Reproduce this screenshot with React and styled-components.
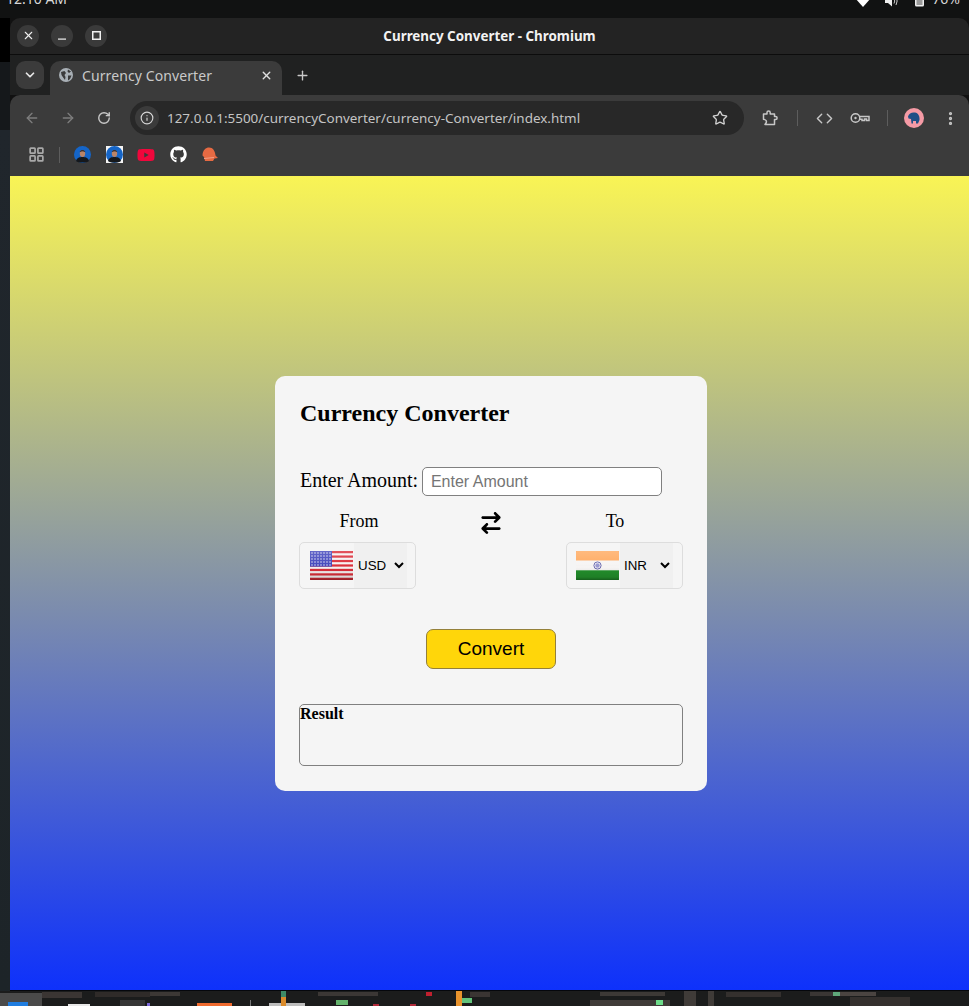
import styled, { createGlobalStyle } from 'styled-components';
import { FaGithub, FaYoutube } from 'react-icons/fa';
import { FaArrowRightArrowLeft } from 'react-icons/fa6';
import {
  ArrowLeft, ArrowRight, RotateCw, Info, Star, ChevronDown, X, Plus, LayoutGrid, Code, EllipsisVertical,
} from 'lucide-react';

const GlobalStyle = createGlobalStyle`
  html, body { margin: 0; padding: 0; background: #111; }
  * { box-sizing: border-box; }
`;

const Screen = styled.div`
  width: 969px;
  height: 1006px;
  overflow: hidden;
  display: flex;
  flex-direction: column;
  background: #111;
`;

const TopBar = styled.div`
  flex: 0 0 18px;
  display: flex;
  justify-content: space-between;
  align-items: flex-end;
  overflow: hidden;
  padding: 0 9px 11px 6px;
  background: #111212;
  color: #d8d8d8;
  font: 14px "Noto Sans", sans-serif;
  line-height: 16px;
`;

const Tray = styled.div`
  display: flex;
  align-items: flex-end;
  gap: 14px;
`;

const TrayPercent = styled.span`
  margin-left: -8px;
`;

const Middle = styled.div`
  flex: 1;
  display: flex;
  min-height: 0;
`;

const SideStrip = styled.div`
  flex: 0 0 10px;
  background: linear-gradient(#000 0, #000 44px, #15181b 44px, #15181b 112px, #20262c 112px, #1d2428 100%);
`;

const Window = styled.div`
  flex: 1;
  display: flex;
  flex-direction: column;
  border-top-left-radius: 10px;
  border-top-right-radius: 10px;
  overflow: hidden;
  border-bottom: 1px solid #05070c;
`;

const TitleBar = styled.div`
  flex: 0 0 37px;
  display: flex;
  align-items: center;
  position: relative;
  gap: 12px;
  padding: 0 0 1px 7px;
  background: #232323;
  border-bottom: 1px solid #0c0c0c;
`;

const WinButton = styled.div`
  width: 22px;
  height: 22px;
  border-radius: 50%;
  background: #3a3a3a;
  color: #efefef;
  display: flex;
  align-items: center;
  justify-content: center;
`;

const WindowTitle = styled.div`
  position: absolute;
  left: 0;
  right: 0;
  text-align: center;
  color: #f2f2f2;
  font: 700 13.4px "Noto Sans", sans-serif;
`;

const TabStrip = styled.div`
  flex: 0 0 40px;
  display: flex;
  align-items: flex-end;
  padding-left: 6px;
  background: #202121;
`;

const TabMenu = styled.div`
  width: 28px;
  height: 28px;
  margin-bottom: 6px;
  border-radius: 9px;
  background: #3b3b3b;
  color: #e6e6e6;
  display: flex;
  align-items: center;
  justify-content: center;
`;

const Tab = styled.div`
  width: 232px;
  height: 34px;
  margin-left: 6px;
  padding: 0 9px 6px 9px;
  display: flex;
  align-items: center;
  border-radius: 10px 10px 0 0;
  background: #3b3b3b;
  color: #c9c9c9;
  font: 14px "Noto Sans", sans-serif;
`;

const TabTitle = styled.span`
  flex: 1;
  margin-left: 9px;
  letter-spacing: 0.1px;
`;

const NewTab = styled.div`
  width: 20px;
  height: 34px;
  margin-left: 10px;
  padding-bottom: 6px;
  color: #c9c9c9;
  display: flex;
  align-items: center;
  justify-content: center;
`;

const Toolbar = styled.div`
  flex: 0 0 40px;
  display: flex;
  align-items: flex-end;
  padding-left: 4px;
  background: #3b3b3b;
  border-radius: 10px 10px 0 0;
`;

const ToolButton = styled.div`
  width: 36px;
  height: 34px;
  display: flex;
  align-items: center;
  justify-content: center;
  color: ${(p) => (p.$dim ? '#7d7d7d' : '#c7c7c7')};
`;

const Omnibox = styled.div`
  width: 614px;
  height: 34px;
  margin: 0 8px;
  padding: 0 16px 0 5px;
  display: flex;
  align-items: center;
  border-radius: 17px;
  background: #282828;
`;

const InfoChip = styled.div`
  width: 24px;
  height: 24px;
  border-radius: 50%;
  background: #3b3b3b;
  color: #d5d5d5;
  display: flex;
  align-items: center;
  justify-content: center;
`;

const Url = styled.div`
  flex: 1;
  margin-left: 8px;
  color: #c4c4c4;
  font: 13.45px "Noto Sans", sans-serif;
`;

const ToolSep = styled.div`
  width: 1px;
  height: 16px;
  margin: 0 8px 9px 9px;
  background: #5d5d5d;
`;

const BookmarkBar = styled.div`
  flex: 0 0 41px;
  display: flex;
  align-items: center;
  gap: 12px;
  padding-left: 14px;
  padding-bottom: 2px;
  background: #3b3b3b;
`;

const BookmarkSep = styled.div`
  width: 1px;
  height: 16px;
  margin-left: -1px;
  background: #5d5d5d;
`;

const Bookmark = styled.div`
  width: 20px;
  height: 20px;
  display: flex;
  align-items: center;
  justify-content: center;
  color: ${(p) => p.$color || '#fff'};
`;

const AppsIcon = styled(Bookmark)`
  width: 24px;
  color: #a8a8a8;
`;

const Page = styled.main`
  flex: 1;
  display: flex;
  align-items: center;
  justify-content: center;
  padding-left: 3px;
  background: linear-gradient(to bottom, #f9f455, #0e31fb);
`;

const Card = styled.section`
  width: 432px;
  height: 415px;
  padding: 24px 24px 0;
  border-radius: 10px;
  background: #f5f5f5;
  font-family: "Liberation Serif", "Times New Roman", serif;
  color: #000;
`;

const Heading = styled.h2`
  margin: 0;
  padding-left: 1px;
  font-size: 24px;
  line-height: 27px;
  font-weight: 700;
`;

const AmountRow = styled.div`
  margin-top: 40px;
  display: flex;
  align-items: flex-start;
  gap: 4px;
  padding-left: 1px;
`;

const AmountLabel = styled.label`
  font-size: 20px;
  line-height: 27px;
  letter-spacing: -0.03px;
`;

const AmountInput = styled.input`
  width: 240px;
  height: 29px;
  padding: 1px 8px 0 8px;
  border: 1px solid #808080;
  border-radius: 5px;
  background: #fff;
  font: 16px "Liberation Sans", Arial, sans-serif;
  &::placeholder { color: #757575; }
`;

const CurrencyRow = styled.div`
  margin-top: 14px;
  display: flex;
  justify-content: space-between;
`;

const CurrencyColumn = styled.div`
  width: 117px;
  display: flex;
  flex-direction: column;
  align-items: center;
  gap: 9px;
`;

const CurrencyLabel = styled.div`
  font-size: 18px;
  line-height: 23px;
  margin-left: ${(p) => p.$left || 0}px;
  margin-right: ${(p) => p.$right || 0}px;
`;

const SwapButton = styled.div`
  height: 27px;
  display: flex;
  align-items: center;
`;

const SelectBox = styled.div`
  width: 117px;
  height: 47px;
  padding-left: ${(p) => p.$pad}px;
  display: flex;
  align-items: center;
  gap: 1px;
  border: 1px solid #ddd;
  border-radius: 5px;
`;

const CurrencySelect = styled.select`
  width: 53px;
  height: 45px;
  border: none;
  outline: none;
  background-color: #f0f0f0;
  color: #000;
  font: 13.33px "Liberation Sans", Arial, sans-serif;
`;

const ConvertButton = styled.button`
  display: block;
  width: 130px;
  height: 40px;
  margin: 40px auto 0;
  border: 1px solid #94803a;
  border-radius: 7px;
  background: #ffd60a;
  color: #000;
  font: 19px "Liberation Sans", Arial, sans-serif;
`;

const ResultBox = styled.div`
  height: 62px;
  margin-top: 35px;
  border: 1px solid #808080;
  border-radius: 5px;
  font-size: 16px;
  line-height: 18px;
  font-weight: 700;
`;

const Dock = styled.svg`
  flex: 0 0 15px;
  display: block;
`;

function FlagGloss({ id }) {
  return (
    <>
      <defs>
        <linearGradient id={id} x1="0" y1="0" x2="0" y2="1">
          <stop offset="0" stopColor="#fff" stopOpacity="0.18" />
          <stop offset="0.45" stopColor="#fff" stopOpacity="0.03" />
          <stop offset="0.55" stopColor="#000" stopOpacity="0" />
          <stop offset="0.9" stopColor="#000" stopOpacity="0.12" />
          <stop offset="1" stopColor="#000" stopOpacity="0.35" />
        </linearGradient>
      </defs>
      <rect width="43" height="29" rx="1" fill={`url(#${id})`} />
    </>
  );
}

function UsFlag() {
  return (
    <svg width="43" height="29" viewBox="0 0 43 29">
      <rect width="43" height="29" rx="1" fill="#f6f2f2" />
      {[0, 2, 4, 6, 8, 10, 12].map((n) => (
        <rect key={n} y={n * 2.23} width="43" height="2.23" fill="#dc2f3a" />
      ))}
      <rect width="22" height="15.6" fill="#4347bd" />
      {[2, 5, 8, 11, 14].map((y) =>
        [2, 5, 8, 11, 14, 17, 20].map((x) => <circle key={`${x}-${y}`} cx={x} cy={y} r="0.75" fill="#e6e6f5" />)
      )}
      <FlagGloss id="usGloss" />
    </svg>
  );
}

function IndiaFlag() {
  return (
    <svg width="43" height="29" viewBox="0 0 43 29">
      <rect width="43" height="9.7" fill="#ffab62" />
      <rect y="9.7" width="43" height="9.6" fill="#f7f5f4" />
      <rect y="19.3" width="43" height="9.7" fill="#23912c" />
      <circle cx="21.5" cy="14.5" r="3.6" fill="none" stroke="#6a6ab0" strokeWidth="1" />
      <circle cx="21.5" cy="14.5" r="2.2" fill="#9a9ad2" />
      <FlagGloss id="inGloss" />
    </svg>
  );
}

function Avatar({ square }) {
  return (
    <svg width="17" height="17" viewBox="0 0 17 17">
      {square ? <rect width="17" height="17" fill="#f4f4f4" /> : null}
      <circle cx="8.5" cy="8.5" r="8.5" fill="#1565c8" />
      <path d="M2 15 C3 11.5 5.5 11 8.5 11 C11.5 11 14 11.5 15 15 C13 17 4 17 2 15Z" fill="#15181c" />
      <ellipse cx="8.5" cy="7.5" rx="2.7" ry="3.6" fill="#b98468" />
      <path d="M5.8 6 C5.8 3.6 11.2 3.6 11.2 6 C10 5 7 5 5.8 6Z" fill="#16181c" />
    </svg>
  );
}

function Helmet() {
  return (
    <svg width="18" height="17" viewBox="0 0 18 17">
      <path d="M1.5 9.5 C1.5 4 5 1.5 8 1.5 C12 1.5 14 5 14.5 9.5 L17 12 L13.5 12.5 L12 15 L4 15 L3 11 Z" fill="#e66a43" />
      <path d="M3 12.5 L13 11.5" stroke="#f3a086" strokeWidth="1" />
    </svg>
  );
}

function ProfileAvatar() {
  return (
    <svg width="20" height="20" viewBox="0 0 20 20">
      <circle cx="10" cy="10" r="10" fill="#f59aa5" />
      <path d="M4 8.5 C5 5 8 4 11 4.5 C14 5 16 8 15.5 12 L14 15.5 L12 15.5 L12 13 L9 13 L9 15.5 L7.5 15.5 L7 11 L4.5 10.5 Z" fill="#1f4f86" />
    </svg>
  );
}

function WifiWedge() {
  return (
    <svg width="16" height="12" viewBox="0 0 16 12">
      <path d="M0 3 C4 -1 12 -1 16 3 L8 12Z" fill="#fff" />
    </svg>
  );
}

function Speaker() {
  return (
    <svg width="14" height="12" viewBox="0 0 14 12">
      <path d="M0 4 H3 L7 0.5 V11.5 L3 8 H0Z" fill="#eee" />
      <path d="M9 3.5 Q10.5 6 9 8.5 M11 2 Q13.3 6 11 10" stroke="#ccc" strokeWidth="1" fill="none" />
    </svg>
  );
}

function Battery() {
  return (
    <svg width="13" height="14" viewBox="0 0 13 14">
      <rect x="4.5" y="0" width="4" height="2" fill="#eee" />
      <rect x="2" y="1.5" width="9" height="12" rx="1.5" fill="#eee" />
      <rect x="3.5" y="4" width="6" height="8" fill="#999" />
    </svg>
  );
}

function MinimizeGlyph() {
  return (
    <svg width="8" height="8" viewBox="0 0 8 8">
      <rect y="6.5" width="8" height="1.2" fill="#efefef" />
    </svg>
  );
}

function MaximizeGlyph() {
  return (
    <svg width="9" height="9" viewBox="0 0 9 9">
      <rect x="0.75" y="0.75" width="7.5" height="7.5" fill="none" stroke="#efefef" strokeWidth="1.5" />
    </svg>
  );
}

function GlobeFill() {
  return (
    <svg width="14" height="14" viewBox="0 0 14 14">
      <circle cx="7" cy="7" r="7" fill="#a9b0b6" />
      <path d="M2 4 L5.5 3 L7 5 L5.5 7 L6.5 9 L6 12 L3.8 9 L2.5 7Z M9 1.5 L12 3.5 L10 5 L8.5 3.5Z M9 7.5 L12.5 7.5 L11 11 L9 12.5Z" fill="#3b3b3b" />
    </svg>
  );
}

function ExtensionIcon() {
  return (
    <svg width="16" height="16" viewBox="0 0 16 16" fill="none" stroke="#c7c7c7" strokeWidth="1.5" strokeLinejoin="round">
      <path d="M1.5 4 H5 V2.6 A1.6 1.6 0 0 1 8.2 2.6 V4 H12.5 V6.6 H13.6 A1.5 1.5 0 0 1 13.6 9.6 H12.5 V14.5 H3 L4.2 12.8 C4.8 11.6 4.2 10 2.8 9.6 L1.5 9.2Z" />
    </svg>
  );
}

function KeyIcon() {
  return (
    <svg width="20" height="12" viewBox="0 0 20 12" fill="none" stroke="#c7c7c7" strokeWidth="1.5">
      <circle cx="5.5" cy="6" r="4.3" />
      <circle cx="5.5" cy="6" r="1.2" fill="#c7c7c7" stroke="none" />
      <path d="M9.8 4.5 H19 V8.5 H16.5 V7 H14.5 V8.5 H12 V7.3 H9.8" />
    </svg>
  );
}

const dockPatches = [
  [0, 2, 42, 13, '#4a4a4a'], [8, 11, 20, 4, '#1f7de0'], [42, 1, 40, 6, '#3a3533'], [95, 1, 55, 5, '#2f2b29'],
  [150, 1, 30, 4, '#3c3835'], [68, 13, 22, 2, '#e8e8e8'], [120, 9, 25, 6, '#353535'], [147, 12, 3, 3, '#7a66d8'],
  [197, 12, 35, 3, '#ef6a2e'], [250, 9, 1, 6, '#777'], [269, 12, 36, 3, '#bdbdbd'],
  [281, 0, 5, 6, '#3d8a66'], [281, 6, 5, 9, '#d98a2a'], [318, 1, 60, 4, '#3b3735'], [336, 9, 12, 5, '#63b26c'],
  [373, 13, 6, 2, '#b02a3a'], [410, 13, 6, 2, '#b02a3a'], [426, 1, 6, 4, '#c0202f'], [456, 0, 6, 15, '#e8932d'],
  [462, 7, 10, 5, '#62c47c'], [470, 1, 20, 5, '#3a3533'], [600, 1, 65, 4, '#3d3936'], [590, 9, 80, 6, '#3f3b38'],
  [656, 9, 7, 5, '#6ddc8a'], [684, 0, 12, 15, '#3f3b38'], [708, 0, 6, 15, '#3f3b38'], [726, 1, 55, 5, '#34302e'],
  [810, 1, 25, 4, '#3a3634'], [836, 1, 40, 4, '#4a4441'], [833, 1, 7, 4, '#5fa87a'], [850, 6, 60, 9, '#34302e'],
];

export default function App() {
  return (
    <Screen>
      <GlobalStyle />
      <TopBar>
        <span>12:10 AM</span>
        <Tray>
          <WifiWedge />
          <Speaker />
          <Battery />
          <TrayPercent>76%</TrayPercent>
        </Tray>
      </TopBar>
      <Middle>
        <SideStrip />
        <Window>
          <TitleBar>
            <WinButton><X size={13} strokeWidth={2} /></WinButton>
            <WinButton><MinimizeGlyph /></WinButton>
            <WinButton><MaximizeGlyph /></WinButton>
            <WindowTitle>Currency Converter - Chromium</WindowTitle>
          </TitleBar>
          <TabStrip>
            <TabMenu><ChevronDown size={14} strokeWidth={3} /></TabMenu>
            <Tab>
              <GlobeFill />
              <TabTitle>Currency Converter</TabTitle>
              <X size={13} strokeWidth={2.6} color="#e0e0e0" />
            </Tab>
            <NewTab><Plus size={15} strokeWidth={2.2} /></NewTab>
          </TabStrip>
          <Toolbar>
            <ToolButton $dim><ArrowLeft size={16} /></ToolButton>
            <ToolButton $dim><ArrowRight size={16} /></ToolButton>
            <ToolButton><RotateCw size={14} strokeWidth={2.4} /></ToolButton>
            <Omnibox>
              <InfoChip><Info size={14} /></InfoChip>
              <Url>127.0.0.1:5500/currencyConverter/currency-Converter/index.html</Url>
              <Star size={16} color="#d0d0d0" />
            </Omnibox>
            <ToolButton><ExtensionIcon /></ToolButton>
            <ToolSep />
            <ToolButton><Code size={17} /></ToolButton>
            <ToolButton><KeyIcon /></ToolButton>
            <ToolSep />
            <ToolButton><ProfileAvatar /></ToolButton>
            <ToolButton><EllipsisVertical size={17} strokeWidth={2.6} /></ToolButton>
          </Toolbar>
          <BookmarkBar>
            <AppsIcon><LayoutGrid size={17} strokeWidth={2.4} /></AppsIcon>
            <BookmarkSep />
            <Bookmark><Avatar /></Bookmark>
            <Bookmark><Avatar square /></Bookmark>
            <Bookmark $color="#f0073c"><FaYoutube size={18} /></Bookmark>
            <Bookmark><FaGithub size={17} /></Bookmark>
            <Bookmark><Helmet /></Bookmark>
          </BookmarkBar>
          <Page>
            <Card>
              <Heading>Currency Converter</Heading>
              <AmountRow>
                <AmountLabel htmlFor="amount">Enter Amount:</AmountLabel>
                <AmountInput id="amount" type="text" placeholder="Enter Amount" />
              </AmountRow>
              <CurrencyRow>
                <CurrencyColumn>
                  <CurrencyLabel $left={3}>From</CurrencyLabel>
                  <SelectBox $pad={10}>
                    <UsFlag />
                    <CurrencySelect defaultValue="USD">
                      <option>USD</option>
                      <option>INR</option>
                    </CurrencySelect>
                  </SelectBox>
                </CurrencyColumn>
                <SwapButton><FaArrowRightArrowLeft size={22} /></SwapButton>
                <CurrencyColumn>
                  <CurrencyLabel $right={19}>To</CurrencyLabel>
                  <SelectBox $pad={9}>
                    <IndiaFlag />
                    <CurrencySelect defaultValue="INR">
                      <option>USD</option>
                      <option>INR</option>
                    </CurrencySelect>
                  </SelectBox>
                </CurrencyColumn>
              </CurrencyRow>
              <ConvertButton type="button">Convert</ConvertButton>
              <ResultBox>Result</ResultBox>
            </Card>
          </Page>
        </Window>
      </Middle>
      <Dock width="969" height="15" viewBox="0 0 969 15">
        <rect width="969" height="15" fill="#1b1c1c" />
        {dockPatches.map(([x, y, w, h, fill]) => (
          <rect key={`${x}-${y}`} x={x} y={y} width={w} height={h} fill={fill} />
        ))}
      </Dock>
    </Screen>
  );
}
